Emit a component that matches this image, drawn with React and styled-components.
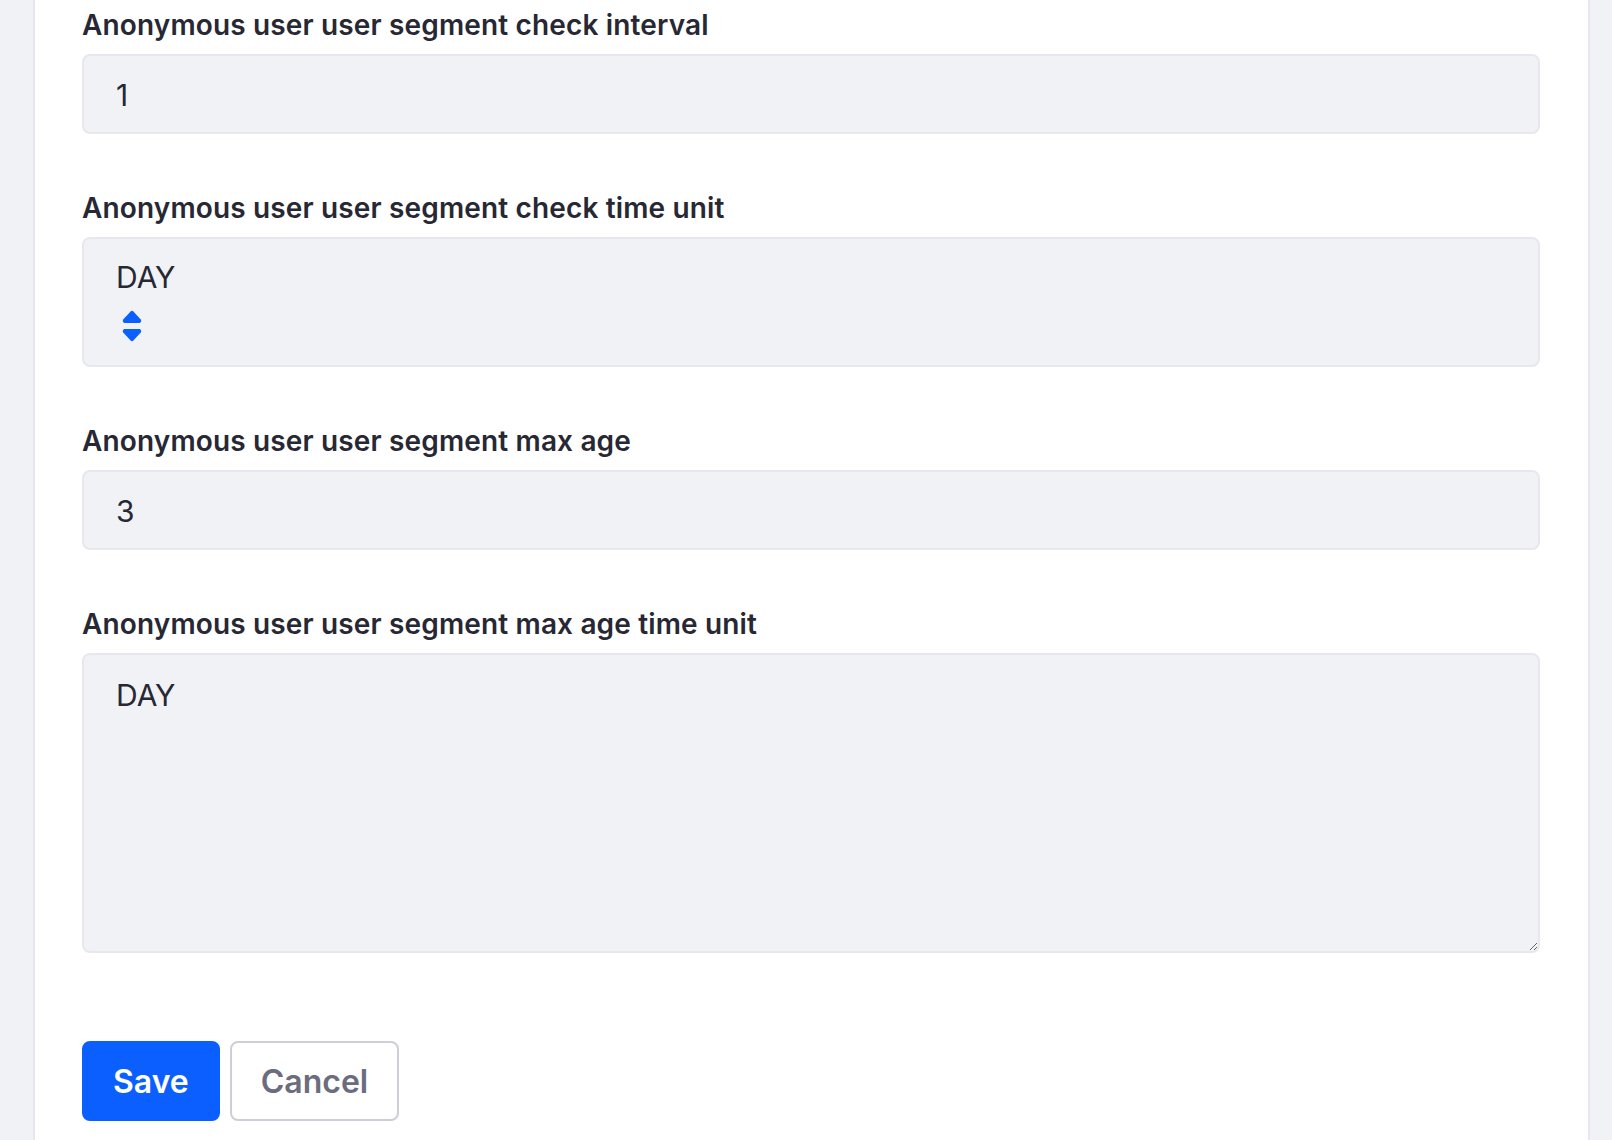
import React from "react";
import styled, { createGlobalStyle } from "styled-components";

const GlobalStyle = createGlobalStyle`
  html, body {
    margin: 0;
    background: #f1f2f5;
    font-family: Inter, "Noto Sans", "Liberation Sans", sans-serif;
    color: #272833;
  }
`;

const Page = styled.div`
  padding: 0 22px 0 33px;
`;

const Sheet = styled.div`
  background: #ffffff;
  border-left: 2px solid #e7e7ed;
  border-right: 2px solid #e7e7ed;
  padding: 4px 48px 20px 47px;
`;

const FormGroup = styled.div`
  margin-bottom: ${(p) => (p.$last ? "0" : "53px")};
`;

const Label = styled.label`
  display: block;
  font-size: 28px;
  font-weight: 600;
  letter-spacing: 0.15px;
  line-height: 42px;
  margin-bottom: 8px;
  color: #272833;
`;

const fieldBase = `
  box-sizing: border-box;
  width: 100%;
  background: #f1f2f5;
  border: 2px solid #e7e7ed;
  border-radius: 8px;
  color: #272833;
  font-family: Inter, "Noto Sans", "Liberation Sans", sans-serif;
  font-size: 30px;
  line-height: 45px;
  padding: 16px 32px 15px;
`;

const Input = styled.input`
  ${fieldBase}
  display: block;
  height: 80px;
  outline: none;
`;

const SelectBox = styled.div`
  ${fieldBase}
  display: flex;
  flex-direction: column;
  align-items: flex-start;
  height: 130px;
`;

const SelectArrows = styled.svg`
  display: block;
  margin: 10px 0 0 6px;
  color: #0b5fff;
`;

const TextArea = styled.textarea`
  ${fieldBase}
  display: block;
  height: 300px;
  padding-top: 18px;
  resize: vertical;
  outline: none;
`;

const ButtonRow = styled.div`
  display: flex;
  gap: 10px;
  margin-top: 88px;
`;

const Button = styled.button`
  box-sizing: border-box;
  height: 80px;
  padding: 0 29px;
  border-radius: 8px;
  font-family: Inter, "Noto Sans", "Liberation Sans", sans-serif;
  font-size: 32px;
  font-weight: 600;
  cursor: pointer;
  border: 2px solid ${(p) => (p.$primary ? "#0b5fff" : "#cdced9")};
  background: ${(p) => (p.$primary ? "#0b5fff" : "#ffffff")};
  color: ${(p) => (p.$primary ? "#ffffff" : "#6b6c7e")};
`;

const App = () => (
  <>
    <GlobalStyle />
    <Page>
      <Sheet>
        <FormGroup>
          <Label>Anonymous user user segment check interval</Label>
          <Input defaultValue="1" />
        </FormGroup>

        <FormGroup>
          <Label>Anonymous user user segment check time unit</Label>
          <SelectBox>
            <span>DAY</span>
            <SelectArrows width="20" height="32" viewBox="0 0 20 32">
              <path
                d="M8.6 1.4a2 2 0 0 1 2.8 0l7.4 8.2c.9 1 .2 3.4-1.2 3.4H2.4C1 13 .3 10.6 1.2 9.6z"
                fill="currentColor"
              />
              <path
                d="M8.6 30.6a2 2 0 0 0 2.8 0l7.4-8.2c.9-1 .2-3.4-1.2-3.4H2.4C1 19 .3 21.4 1.2 22.4z"
                fill="currentColor"
              />
            </SelectArrows>
          </SelectBox>
        </FormGroup>

        <FormGroup>
          <Label>Anonymous user user segment max age</Label>
          <Input defaultValue="3" />
        </FormGroup>

        <FormGroup $last>
          <Label>Anonymous user user segment max age time unit</Label>
          <TextArea defaultValue="DAY" />
        </FormGroup>

        <ButtonRow>
          <Button $primary>Save</Button>
          <Button>Cancel</Button>
        </ButtonRow>
      </Sheet>
    </Page>
  </>
);

export default App;
